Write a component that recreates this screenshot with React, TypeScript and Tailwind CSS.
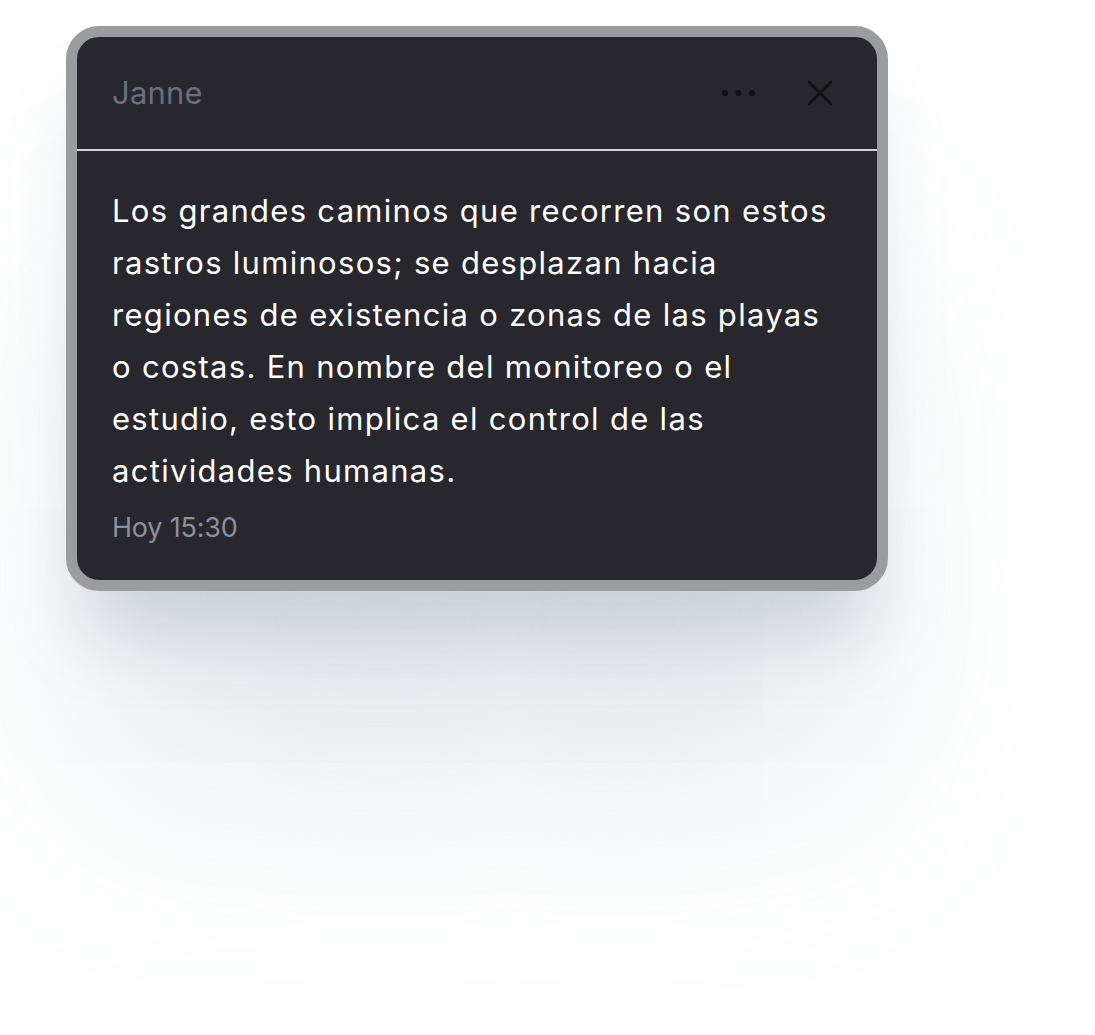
import React from "react";

export default function App() {
  return (
    <div className="min-h-[1035px] w-full bg-white" style={{ fontFamily: "Inter, 'Noto Sans', sans-serif" }}>
      <div className="pl-[66px] pt-[26px]">
        <div className="w-[822px] rounded-[33px] border-[11px] border-[#9a9ca0] bg-[#28272d] shadow-[0_60px_70px_-20px_rgba(150,170,185,0.4),0_220px_200px_-40px_rgba(170,185,198,0.35)]">
          <div className="flex h-[112px] items-center justify-between pl-[35px] pr-[44px]">
            <span className="text-[31px] text-[#667080] tracking-[0.2px]">Janne</span>
            <div className="flex items-center gap-[50px]">
              <svg width="36" height="8" viewBox="0 0 36 8">
                <circle cx="4" cy="4" r="3" fill="#111114" />
                <circle cx="17.5" cy="4" r="3" fill="#111114" />
                <circle cx="31" cy="4" r="3" fill="#111114" />
              </svg>
              <svg width="26" height="26" viewBox="0 0 26 26">
                <path d="M2 2 L24 24 M24 2 L2 24" stroke="#111114" strokeWidth="2.6" strokeLinecap="round" />
              </svg>
            </div>
          </div>
          <div className="h-[2px] bg-[#d4d4d8]" />
          <div className="px-[35px] pt-[34px] pb-[32px]">
            <p className="w-[735px] text-[31px] leading-[52px] text-white tracking-[1.3px]">
              Los grandes caminos que recorren son estos rastros luminosos; se desplazan hacia regiones de existencia o zonas de las playas o costas. En nombre del monitoreo o el estudio, esto implica el control de las actividades humanas.
            </p>
            <p className="mt-[11px] text-[27px] leading-[40px] text-[#8a909c] tracking-[-0.2px]">Hoy 15:30</p>
          </div>
        </div>
      </div>
    </div>
  );
}
